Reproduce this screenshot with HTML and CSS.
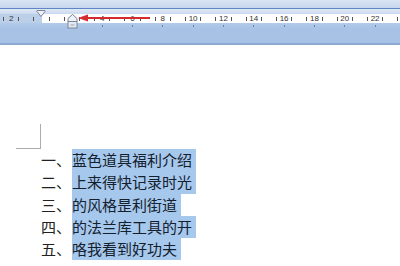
FILE: index.html
```html
<!DOCTYPE html>
<html lang="zh-CN">
<head>
  <meta charset="UTF-8">
  <title>标尺 - 悬挂缩进</title>
  <link rel="stylesheet" href="styles.css">
</head>
<body>

  <div class="toolbar">
    <div class="top-band"></div>
    <div class="ruler-gap"></div>

    <div class="ruler">
      <div class="cell"><i></i><span>2</span><i></i></div>
      <div class="cell"><i></i><span></span><i></i></div>
      <div class="cell"><i></i><span></span><i></i></div>
      <div class="cell"><i></i><span>4</span><i></i></div>
      <div class="cell"><i></i><span>6</span><i></i></div>
      <div class="cell"><i></i><span>8</span><i></i></div>
      <div class="cell"><i></i><span>10</span><i></i></div>
      <div class="cell"><i></i><span>12</span><i></i></div>
      <div class="cell"><i></i><span>14</span><i></i></div>
      <div class="cell"><i></i><span>16</span><i></i></div>
      <div class="cell"><i></i><span>18</span><i></i></div>
      <div class="cell"><i></i><span>20</span><i></i></div>
      <div class="cell"><i></i><span>22</span><i></i></div>
      <div class="cell"><i></i><span></span><i></i></div>
    </div>

    <div class="tabstops">
      <div class="stop"></div>
      <div class="stop"></div>
      <div class="stop"></div>
      <div class="stop on"></div>
      <div class="stop on"></div>
      <div class="stop on"></div>
      <div class="stop on"></div>
      <div class="stop on"></div>
      <div class="stop on"></div>
      <div class="stop on"></div>
      <div class="stop on"></div>
      <div class="stop on"></div>
      <div class="stop on"></div>
      <div class="stop"></div>
    </div>

    <div class="toolbar-bottom"></div>

    <!-- first line indent -->
    <svg class="marker first-indent" width="10" height="8" viewBox="0 0 10 8">
      <path d="M1 0.5 H9 V1.5 L5 6.5 L1 1.5 Z" fill="#eef2f8" stroke="#7b8594" stroke-width="1"/>
    </svg>

    <!-- hanging indent + left indent -->
    <svg class="marker hanging" width="11" height="15" viewBox="0 0 11 15">
      <path d="M5.5 0.5 L10 4.5 V7.5 H1 V4.5 Z" fill="#eef2f8" stroke="#7b8594" stroke-width="1"/>
      <rect x="1" y="7.5" width="9" height="6.5" fill="#e4eaf3" stroke="#7b8594" stroke-width="1"/>
      <line x1="3.5" y1="11" x2="7.5" y2="11" stroke="#9aa3b0" stroke-width="1"/>
    </svg>

    <!-- red arrow -->
    <svg class="arrow" width="74" height="8" viewBox="0 0 74 8">
      <line x1="8" y1="4" x2="72" y2="4" stroke="#d62a2e" stroke-width="2"/>
      <path d="M0 4 L10 0.5 L10 7.5 Z" fill="#d62a2e"/>
    </svg>
  </div>

  <div class="page">
    <div class="corner"></div>

    <ul class="list">
      <li><span class="num">一、</span><span class="sel">蓝色道具福利介绍</span></li>
      <li><span class="num">二、</span><span class="sel">上来得快记录时光</span></li>
      <li><span class="num">三、</span><span class="sel">的风格昰利街道</span></li>
      <li><span class="num">四、</span><span class="sel">的法兰库工具的开</span></li>
      <li><span class="num">五、</span><span class="sel">咯我看到好功夫</span></li>
    </ul>
  </div>

</body>
</html>
```

FILE: styles.css
```css
body {
  margin: 0;
  background: #fff;
  font-family: "Noto Sans CJK SC", "Noto Sans", sans-serif;
  overflow: hidden;
}

.toolbar {
  position: relative;
  background: #a9c3e6;
  overflow: hidden;
}

.top-band {
  height: 8px;
  background: linear-gradient(#dbe5f4, #c6d6ee);
  border-bottom: 1px solid #5f86c3;
}

.ruler-gap {
  height: 5px;
  background: linear-gradient(#dfe9f6, #cbdaef);
}

.ruler {
  display: flex;
  height: 9px;
  padding-left: 42px;
  overflow: hidden;
  background: linear-gradient(to right, #bccfe9 0 42px, #fff 42px);
}

.cell {
  flex: 0 0 30.33px;
  display: flex;
  align-items: center;
  justify-content: space-between;
  padding: 0 7px;
  box-sizing: border-box;
}

.cell:first-child {
  margin-left: -46px;
}

.cell i {
  width: 1px;
  height: 4px;
  background: #555;
}

.cell span {
  font-family: "Liberation Sans", Arial, sans-serif;
  font-size: 8px;
  line-height: 9px;
  color: #333;
}

.tabstops {
  display: flex;
  height: 5px;
  padding-left: 42px;
  overflow: hidden;
  background: linear-gradient(#b3cae9, #a9c3e6);
}

.stop {
  flex: 0 0 30.33px;
  display: flex;
  justify-content: center;
}

.stop:first-child {
  margin-left: -46px;
}

.stop.on::after {
  content: "";
  width: 1px;
  height: 2px;
  margin-top: 2px;
  background: #6d84a8;
}

.toolbar-bottom {
  height: 15px;
  background: #a8c2e6;
  border-bottom: 2px solid #8da9d3;
  box-shadow: 0 1px 0 #d8e2ef;
}

.marker,
.arrow {
  position: absolute;
  display: block;
}

.first-indent {
  left: 36px;
  top: 10px;
}

.hanging {
  left: 67px;
  top: 14px;
}

.arrow {
  left: 78px;
  top: 14px;
}

.page {
  padding-top: 79px;
}

.corner {
  width: 24px;
  height: 24px;
  margin-left: 16px;
  border-right: 1px solid #acacac;
  border-bottom: 1px solid #acacac;
}

.list {
  list-style: none;
  margin: 0;
  padding: 0 0 0 41px;
}

.list li {
  display: flex;
  height: 22.3px;
  font-size: 15px;
  line-height: 22.3px;
}

.num {
  width: 31px;
  color: #222;
}

.sel {
  background: #a6c8ec;
  color: #14202e;
  padding-right: 4px;
}
```
